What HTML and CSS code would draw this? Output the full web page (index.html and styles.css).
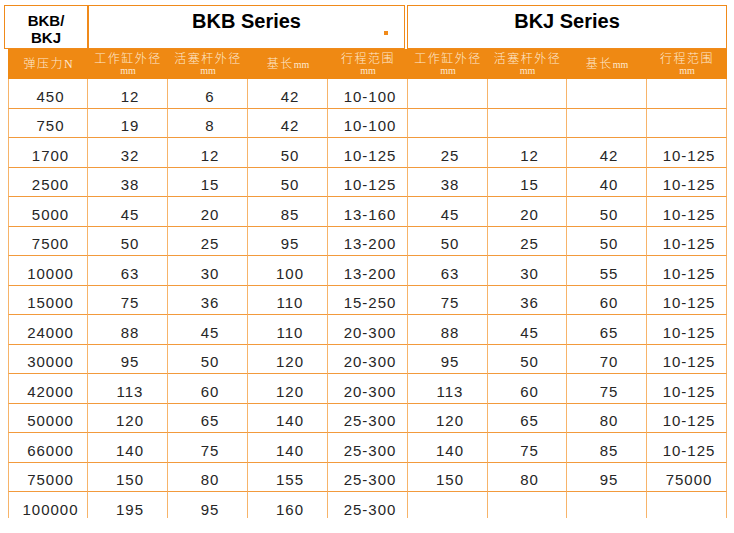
FILE: index.html
```html
<!DOCTYPE html>
<html lang="zh">
<head>
<meta charset="utf-8">
<title>BKB / BKJ Series</title>
<link rel="stylesheet" href="styles.css">
</head>
<body>
<div class="titles">
  <div class="box corner">BKB/<br>BKJ</div>
  <div class="box series bkb">BKB Series<span class="dot"></span></div>
  <div class="box series bkj">BKJ Series</div>
</div>
<div class="tablewrap">
  <table class="spec">
    <colgroup>
      <col class="c"><col class="c"><col class="c"><col class="c"><col class="c"><col class="c"><col class="c narrow"><col class="c"><col class="c">
    </colgroup>
    <thead>
      <tr>
        <th>弹压力<span class="n">N</span></th>
        <th>工作缸外径<span class="unit">mm</span></th>
        <th>活塞杆外径<span class="unit">mm</span></th>
        <th>基长<span class="u">mm</span></th>
        <th>行程范围<span class="unit">mm</span></th>
        <th>工作缸外径<span class="unit">mm</span></th>
        <th>活塞杆外径<span class="unit">mm</span></th>
        <th>基长<span class="u">mm</span></th>
        <th>行程范围<span class="unit">mm</span></th>
      </tr>
    </thead>
    <tbody>
      <tr><td>450</td><td>12</td><td>6</td><td>42</td><td>10-100</td><td></td><td></td><td></td><td></td></tr>
      <tr><td>750</td><td>19</td><td>8</td><td>42</td><td>10-100</td><td></td><td></td><td></td><td></td></tr>
      <tr><td>1700</td><td>32</td><td>12</td><td>50</td><td>10-125</td><td>25</td><td>12</td><td>42</td><td>10-125</td></tr>
      <tr><td>2500</td><td>38</td><td>15</td><td>50</td><td>10-125</td><td>38</td><td>15</td><td>40</td><td>10-125</td></tr>
      <tr><td>5000</td><td>45</td><td>20</td><td>85</td><td>13-160</td><td>45</td><td>20</td><td>50</td><td>10-125</td></tr>
      <tr><td>7500</td><td>50</td><td>25</td><td>95</td><td>13-200</td><td>50</td><td>25</td><td>50</td><td>10-125</td></tr>
      <tr><td>10000</td><td>63</td><td>30</td><td>100</td><td>13-200</td><td>63</td><td>30</td><td>55</td><td>10-125</td></tr>
      <tr><td>15000</td><td>75</td><td>36</td><td>110</td><td>15-250</td><td>75</td><td>36</td><td>60</td><td>10-125</td></tr>
      <tr><td>24000</td><td>88</td><td>45</td><td>110</td><td>20-300</td><td>88</td><td>45</td><td>65</td><td>10-125</td></tr>
      <tr><td>30000</td><td>95</td><td>50</td><td>120</td><td>20-300</td><td>95</td><td>50</td><td>70</td><td>10-125</td></tr>
      <tr><td>42000</td><td>113</td><td>60</td><td>120</td><td>20-300</td><td>113</td><td>60</td><td>75</td><td>10-125</td></tr>
      <tr><td>50000</td><td>120</td><td>65</td><td>140</td><td>25-300</td><td>120</td><td>65</td><td>80</td><td>10-125</td></tr>
      <tr><td>66000</td><td>140</td><td>75</td><td>140</td><td>25-300</td><td>140</td><td>75</td><td>85</td><td>10-125</td></tr>
      <tr><td>75000</td><td>150</td><td>80</td><td>155</td><td>25-300</td><td>150</td><td>80</td><td>95</td><td>75000</td></tr>
      <tr><td>100000</td><td>195</td><td>95</td><td>160</td><td>25-300</td><td></td><td></td><td></td><td></td></tr>
    </tbody>
  </table>
</div>
</body>
</html>
```

FILE: styles.css
```css
html, body {
  margin: 0;
  padding: 0;
  background: #ffffff;
}

body {
  font-family: "Liberation Sans", Arial, sans-serif;
  color: #222222;
}

.titles {
  display: flex;
  margin: 5px 0 0 4px;
  height: 44px;
}

.box {
  box-sizing: border-box;
  height: 44px;
  border: 1px solid #f08a1a;
  text-align: center;
  font-weight: bold;
  color: #000000;
}

.corner {
  width: 84px;
  font-size: 15px;
  line-height: 17px;
  padding-top: 6px;
}

.series {
  font-size: 20px;
  line-height: 23px;
  padding-top: 4px;
}

.bkb {
  width: 317px;
  position: relative;
}

.bkj {
  width: 320px;
  margin-left: 2px;
}

.dot {
  position: absolute;
  left: 295px;
  top: 25px;
  width: 4px;
  height: 4px;
  background: #f08a1a;
}

.tablewrap {
  margin-left: 8px;
  width: 720px;
  height: 469px;
  overflow: hidden;
}

.spec {
  table-layout: fixed;
  border-collapse: separate;
  border-spacing: 0;
  width: 719px;
}

.spec .c {
  width: 80px;
}

.spec .narrow {
  width: 79px;
}

.spec th {
  height: 29px;
  padding: 0 0 1px;
  background: #ef8913;
  color: #fde8d0;
  font-family: "Noto Sans CJK SC", "Liberation Serif", serif;
  font-weight: 300;
  font-size: 12px;
  letter-spacing: 1.5px;
  line-height: 14px;
  text-align: center;
  vertical-align: middle;
}

.spec th .unit {
  display: block;
  font-family: "Liberation Serif", serif;
  font-size: 10px;
  line-height: 11px;
  letter-spacing: 0;
}

.spec th .u {
  font-family: "Liberation Serif", serif;
  font-size: 10px;
  letter-spacing: 0;
}

.spec th .n {
  font-family: "Liberation Serif", serif;
  font-size: 12px;
  letter-spacing: 0;
}

.spec tbody tr {
  height: 29.5px;
}

.spec td {
  padding: 6px 0 0 5px;
  border-right: 1px solid #f7b46a;
  border-bottom: 1px solid #f29a3c;
  font-size: 15px;
  letter-spacing: 1px;
  line-height: 17px;
  text-align: center;
  vertical-align: middle;
  color: #262626;
}

.spec td:first-child {
  border-left: 1px solid #f7b46a;
}
```
